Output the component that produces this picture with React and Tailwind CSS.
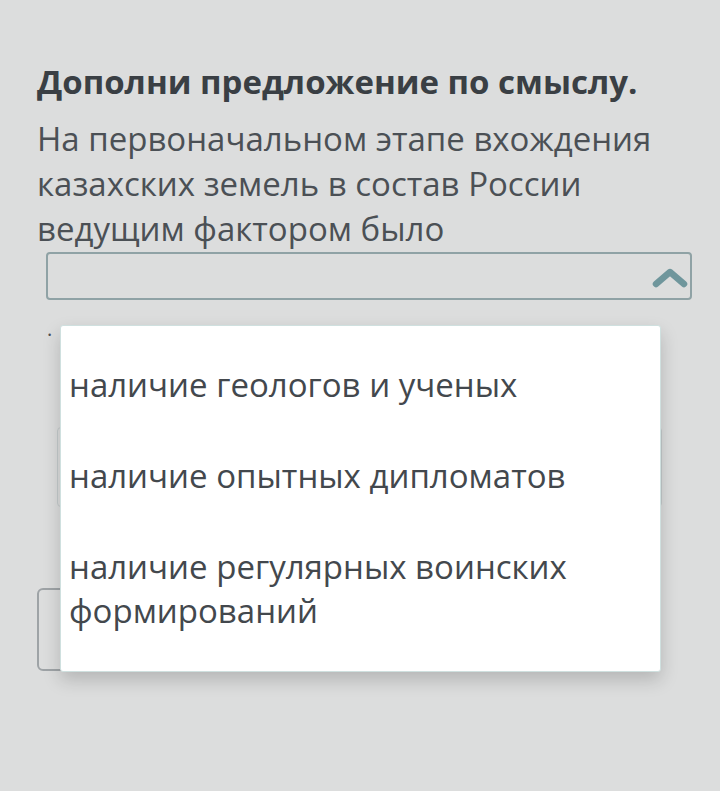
import React from "react";

export default function App() {
  return (
    <div className="relative w-[720px] h-[791px] overflow-hidden bg-[#dcdddd]" style={{ fontFamily: '"Open Sans", sans-serif' }}>
      <div className="pl-[37px] pr-[20px] pt-[60px]">
        <h1 className="text-[33px] leading-[44px] font-bold text-[#3a3f44] whitespace-nowrap">Дополни предложение по смыслу.</h1>
        <p className="mt-[12px] text-[33px] leading-[45px] text-[#4b5055]">
          На первоначальном этапе вхождения казахских земель в состав России ведущим фактором было
        </p>
        <div className="ml-[9px] mr-[8px] mt-[1px] h-[48px] rounded-[4px] border-2 border-[#8fa2a5] flex items-center justify-end pr-[2px] pt-[3px]">
          <svg width="36" height="22" viewBox="0 0 36 22">
            <path d="M4 17 L18 5 L32 17" fill="none" stroke="#6f969c" strokeWidth="6.5" strokeLinecap="round" strokeLinejoin="round" />
          </svg>
        </div>
        <div className="mt-[19px] ml-[10px] text-[#4b5055] text-[20px] leading-[20px]">.</div>
        <div className="mt-[88px] ml-[20px] mr-[38px] h-[80px] rounded-[4px] border border-[#c4cbcc]"></div>
        <div className="mt-[81px] w-[300px] h-[83px] rounded-[6px] border-2 border-[#9ea3a6]"></div>
      </div>
      <div className="absolute left-[60px] top-[325px] w-[601px] h-[347px] bg-white rounded-[3px] border border-[#cfe0df] shadow-[0_8px_18px_rgba(0,0,0,0.18)] pl-[8px] pt-[37px]">
        <div className="text-[33px] leading-[44px] text-[#43484d]">наличие геологов и ученых</div>
        <div className="mt-[47px] text-[33px] leading-[44px] text-[#43484d]">наличие опытных дипломатов</div>
        <div className="mt-[47px] text-[33px] leading-[44px] text-[#43484d]">наличие регулярных воинских формирований</div>
      </div>
    </div>
  );
}
